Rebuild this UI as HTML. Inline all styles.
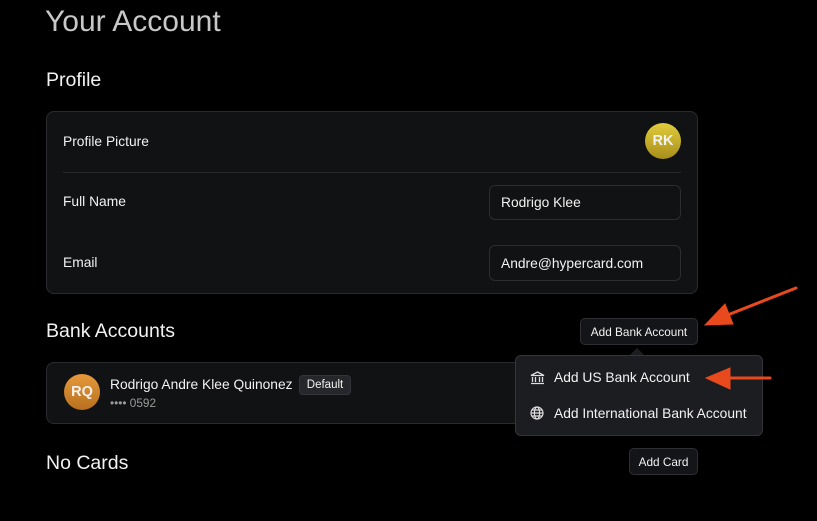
<!DOCTYPE html><html><head><style>
body{margin:0;width:817px;height:521px;background:#000;font-family:"Liberation Sans",sans-serif;color:#f2f2f2;position:relative;overflow:hidden}
.a{position:absolute}
.card{background:#111214;border:1px solid #2a2b2e;border-radius:8px}
.t{font-size:13.8px}
.btn{background:#141518;border:1px solid #2e2f33;border-radius:5px;font-size:11.8px;display:flex;align-items:center;justify-content:center;box-sizing:border-box}
.inp{border:1px solid #2c2d31;border-radius:6px;box-sizing:border-box;font-size:13.8px;padding-left:11px;display:flex;align-items:center;background:#111214}
.av{border-radius:50%;font-size:14.5px;display:flex;align-items:center;justify-content:center;font-weight:bold}
</style></head><body>
<div class="a" style="left:45px;top:5px;font-size:30px;color:#c8c8c8">Your Account</div>
<div class="a" style="left:46px;top:69px;font-size:19.5px">Profile</div>
<div class="a card" style="left:46px;top:111px;width:650px;height:181px"></div>
<div class="a t" style="left:63px;top:134px">Profile Picture</div>
<div class="a av" style="left:645px;top:123px;width:36px;height:36px;background:linear-gradient(#e2cc3c,#a88e1c)">RK</div>
<div class="a" style="left:63px;top:172px;width:618px;height:1px;background:#2a2b2e"></div>
<div class="a t" style="left:63px;top:194px">Full Name</div>
<div class="a inp" style="left:489px;top:185px;width:192px;height:35px">Rodrigo Klee</div>
<div class="a t" style="left:63px;top:255px">Email</div>
<div class="a inp" style="left:489px;top:245px;width:192px;height:36px">Andre@hypercard.com</div>
<div class="a" style="left:46px;top:320px;font-size:19.5px">Bank Accounts</div>
<div class="a btn" style="left:580px;top:318px;width:118px;height:27px">Add Bank Account</div>
<div class="a card" style="left:46px;top:362px;width:650px;height:60px"></div>
<div class="a av" style="left:64px;top:374px;width:36px;height:36px;background:linear-gradient(#e69a3a,#b8701f)">RQ</div>
<div class="a t" style="left:110px;top:377px">Rodrigo Andre Klee Quinonez</div>
<div class="a" style="left:299px;top:375px;width:52px;height:20px;background:#26272b;border:1px solid #33343a;border-radius:4px;box-sizing:border-box;font-size:11.5px;display:flex;align-items:center;justify-content:center">Default</div>
<div class="a" style="left:110px;top:396px;font-size:11.8px;color:#9a9a9a">•••• 0592</div>
<div class="a" style="left:632px;top:350px;width:10px;height:10px;background:#1c1d21;transform:rotate(45deg)"></div>
<div class="a" style="left:515px;top:355px;width:248px;height:81px;background:#1c1d21;border:1px solid #34353a;border-radius:6px;box-sizing:border-box"></div>
<svg class="a" style="left:530px;top:371px" width="15" height="14" viewBox="0 0 15 14" fill="none" stroke="#ddd" stroke-width="1.3"><path d="M1 4.5L7.5 1 14 4.5z M2.5 6v5M5.5 6v5M9.5 6v5M12.5 6v5M1 12.5h13"/></svg>
<div class="a t" style="left:554px;top:370px">Add US Bank Account</div>
<svg class="a" style="left:530px;top:406px" width="14" height="14" viewBox="0 0 14 14" fill="none" stroke="#ddd" stroke-width="1.2"><circle cx="7" cy="7" r="6"/><ellipse cx="7" cy="7" rx="2.6" ry="6"/><path d="M1 7h12M2 4h10M2 10h10"/></svg>
<div class="a t" style="left:554px;top:406px">Add International Bank Account</div>
<div class="a" style="left:46px;top:452px;font-size:19.5px">No Cards</div>
<div class="a btn" style="left:629px;top:448px;width:69px;height:27px">Add Card</div>
<svg class="a" style="left:0;top:0" width="817" height="521"><g fill="#e8491d" stroke="#e8491d" stroke-linecap="round"><path d="M796 288L720 318" stroke-width="3"/><path d="M705 325L725 304L733 324z"/><path d="M770 378L722 378" stroke-width="3"/><path d="M706 378L730 368L730 389z"/></g></svg>
</body></html>
